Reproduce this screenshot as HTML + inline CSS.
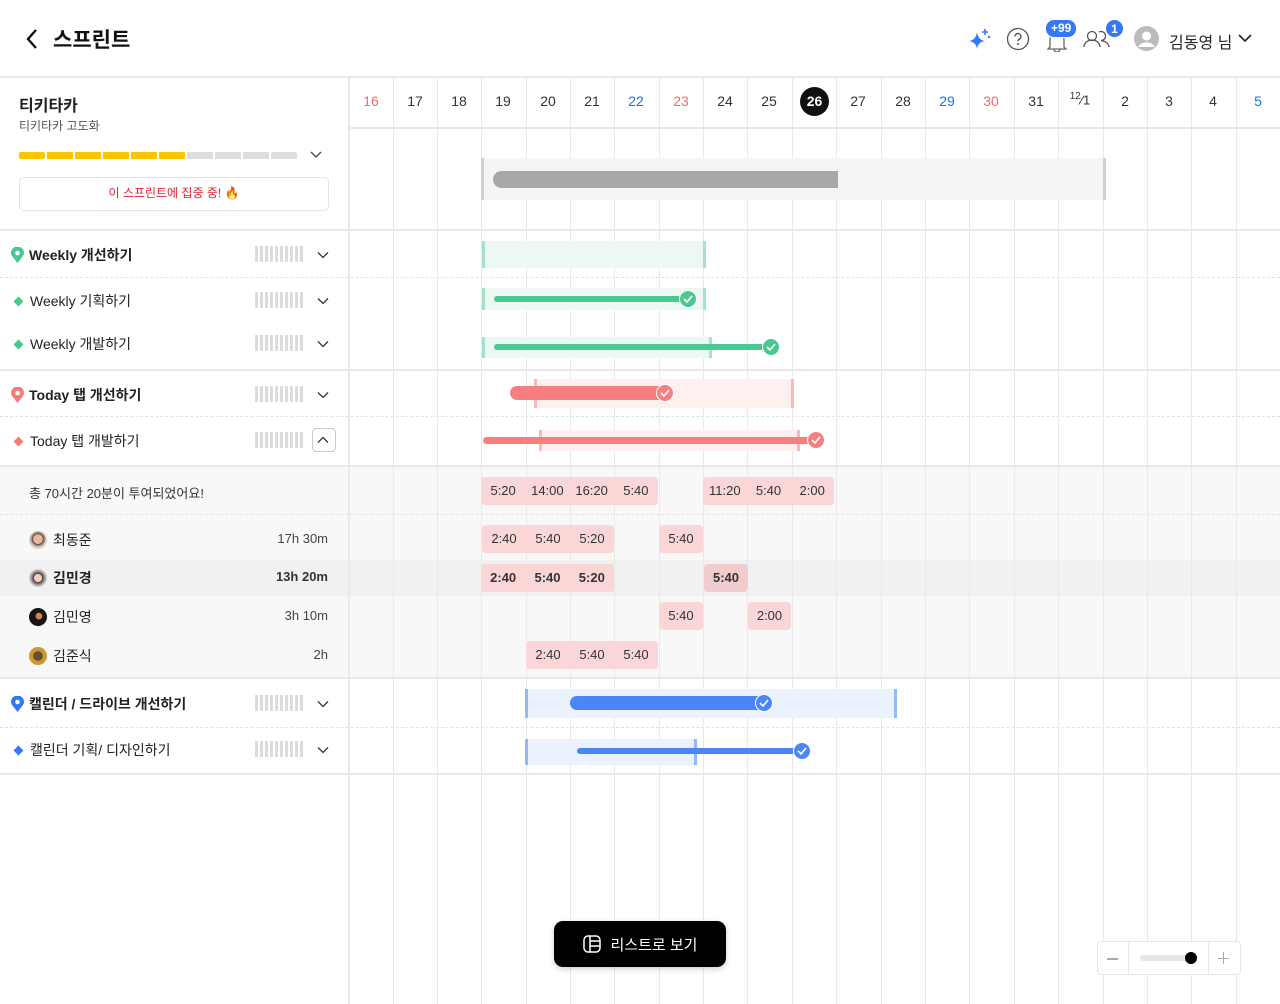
<!DOCTYPE html>
<html><head><meta charset="utf-8">
<style>
*{margin:0;padding:0;box-sizing:border-box}
body{width:1280px;height:1004px;position:relative;background:#fff;font-family:"Liberation Sans","Noto Sans CJK KR",sans-serif;color:#222;overflow:hidden}
.a{position:absolute}
.vl{position:absolute;top:77px;bottom:0;width:1px;background:#e9e9e9}
.hl{position:absolute;left:0;right:0;height:2px;background:#e8e8e8}
.dl{position:absolute;left:0;right:0;border-top:1px dashed #e2e2e2}
.d{position:absolute;top:93px;width:44px;text-align:center;font-size:14px;color:#333}
.lbl{position:absolute;font-size:14px;color:#222;display:flex;align-items:center;gap:6px;white-space:nowrap}
.sub{gap:8px}
.bars{position:absolute;left:255px;width:48px;height:16px;background:repeating-linear-gradient(90deg,#dcdcdc 0 3px,transparent 3px 5px)}
.chev{position:absolute;left:317px;width:12px;height:12px}
.chip{position:absolute;background:#fad6d6;border-radius:4px;display:flex;font-size:13px;color:#333}
.chip span{flex:1;text-align:center;line-height:28px}
.ck{position:absolute;width:18px;height:18px;border-radius:50%;border:1.5px solid #fff;display:flex;align-items:center;justify-content:center}
.av{width:18px;height:18px;border-radius:50%;display:inline-block}
</style></head><body>
<svg class="a" style="left:24px;top:28px" width="16" height="22" viewBox="0 0 16 22"><path d="M12 2 L4 11 L12 20" fill="none" stroke="#111" stroke-width="2.4"/></svg>
<div class="a" style="left:53px;top:24px;font-size:21px;font-weight:bold;color:#111">스프린트</div>

<svg class="a" style="left:968px;top:27px" width="24" height="24" viewBox="0 0 24 24"><path d="M9 5 Q10 13 17 14 Q10 15 9 22 Q8 15 1 14 Q8 13 9 5Z" fill="#3478f6"/><path d="M17 2v6M14 5h6" stroke="#3478f6" stroke-width="1.6"/><circle cx="21" cy="10" r="1.2" fill="#3478f6"/></svg>
<svg class="a" style="left:1006px;top:27px" width="24" height="24" viewBox="0 0 24 24"><circle cx="12" cy="12" r="10.5" fill="none" stroke="#555" stroke-width="1.3"/><path d="M9 9.5a3 3 0 1 1 4 2.8c-.8.4-1 1-1 2" fill="none" stroke="#555" stroke-width="1.4"/><circle cx="12" cy="17" r="1" fill="#555"/></svg>
<svg class="a" style="left:1045px;top:30px" width="24" height="22" viewBox="0 0 24 22"><path d="M5 17V10a7 7 0 0 1 14 0v7l2 2H3z M9 19a3 3 0 0 0 6 0" fill="none" stroke="#666" stroke-width="1.3"/></svg>
<div class="a" style="left:1045px;top:19px;background:#3478f6;color:#fff;font-size:12px;font-weight:bold;border-radius:9px;padding:0 5px;line-height:17px;border:1.5px solid #fff">+99</div>
<svg class="a" style="left:1083px;top:29px" width="28" height="20" viewBox="0 0 28 20"><circle cx="9" cy="7" r="4.5" fill="none" stroke="#555" stroke-width="1.3"/><path d="M1 18a8 7 0 0 1 16 0" fill="none" stroke="#555" stroke-width="1.3"/><path d="M16 3a4.5 4.5 0 1 1 2 8.5M19 12a7 7 0 0 1 7 6" fill="none" stroke="#555" stroke-width="1.3"/></svg>
<div class="a" style="left:1105px;top:19px;width:19px;height:19px;border-radius:50%;background:#3478f6;color:#fff;font-size:12px;font-weight:bold;text-align:center;line-height:18px;border:1.5px solid #fff">1</div>
<svg class="a" style="left:1134px;top:26px" width="25" height="25" viewBox="0 0 25 25"><circle cx="12.5" cy="12.5" r="12.5" fill="#bbb"/><circle cx="12.5" cy="10" r="4.5" fill="#fff"/><path d="M4 21a9 7 0 0 1 17 0" fill="#fff"/></svg>
<div class="a" style="left:1169px;top:29px;font-size:16px;color:#222;white-space:nowrap">김동영 님</div>
<svg class="a" style="left:1238px;top:33px" width="14" height="10" viewBox="0 0 14 10"><path d="M1 2l6 6 6-6" fill="none" stroke="#222" stroke-width="1.6"/></svg>

<div class="hl" style="top:76px"></div>
<div class="a" style="left:349px;top:127px;right:0;height:2px;background:#e8e8e8"></div>
<div class="hl" style="top:229px"></div>
<div class="hl" style="top:369px"></div>
<div class="a" style="left:0;right:0;top:466px;height:212px;background:#f8f8f8"></div>
<div class="a" style="left:0;right:0;top:560px;height:36px;background:#f1f1f1"></div>
<div class="hl" style="top:465px"></div>
<div class="hl" style="top:677px"></div>
<div class="hl" style="top:773px"></div>
<div class="dl" style="top:277px"></div>
<div class="dl" style="top:416px"></div>
<div class="dl" style="top:514px"></div>
<div class="dl" style="top:727px"></div>
<div class="vl" style="left:348px;width:2px"></div>
<div class="vl" style="left:393px"></div><div class="vl" style="left:437px"></div><div class="vl" style="left:481px"></div><div class="vl" style="left:526px"></div><div class="vl" style="left:570px"></div><div class="vl" style="left:614px"></div><div class="vl" style="left:659px"></div><div class="vl" style="left:703px"></div><div class="vl" style="left:747px"></div><div class="vl" style="left:792px"></div><div class="vl" style="left:836px"></div><div class="vl" style="left:881px"></div><div class="vl" style="left:925px"></div><div class="vl" style="left:969px"></div><div class="vl" style="left:1014px"></div><div class="vl" style="left:1058px"></div><div class="vl" style="left:1103px"></div><div class="vl" style="left:1147px"></div><div class="vl" style="left:1191px"></div><div class="vl" style="left:1236px"></div>

<div class="d" style="left:349px;color:#f06a6a">16</div><div class="d" style="left:393px">17</div><div class="d" style="left:437px">18</div><div class="d" style="left:481px">19</div><div class="d" style="left:526px">20</div><div class="d" style="left:570px">21</div><div class="d" style="left:614px;color:#1f6fe5">22</div><div class="d" style="left:659px;color:#f06a6a">23</div><div class="d" style="left:703px">24</div><div class="d" style="left:747px">25</div>
<div class="a" style="left:800px;top:87px;width:29px;height:29px;border-radius:50%;background:#111;color:#fff;font-weight:bold;font-size:14px;text-align:center;line-height:29px">26</div>
<div class="d" style="left:836px">27</div><div class="d" style="left:881px">28</div><div class="d" style="left:925px;color:#1f6fe5">29</div><div class="d" style="left:969px;color:#f06a6a">30</div><div class="d" style="left:1014px">31</div>
<div class="d" style="left:1058px;top:91px;font-size:13px"><sup style="font-size:10px">12</sup>⁄<span style="font-size:13px">1</span></div>
<div class="d" style="left:1103px">2</div><div class="d" style="left:1147px">3</div><div class="d" style="left:1191px">4</div><div class="d" style="left:1236px;color:#1f6fe5">5</div>

<div class="a" style="left:19px;top:92px;font-size:16px;font-weight:bold">티키타카</div>
<div class="a" style="left:19px;top:117px;font-size:12px;color:#555">티키타카 고도화</div>
<div class="a" style="left:19px;top:152px;display:flex;gap:2px">
<i style="width:26px;height:7px;background:#fdc500;border-radius:2px"></i><i style="width:26px;height:7px;background:#fdc500"></i><i style="width:26px;height:7px;background:#fdc500"></i><i style="width:26px;height:7px;background:#fdc500"></i><i style="width:26px;height:7px;background:#fdc500"></i><i style="width:26px;height:7px;background:#fdc500"></i><i style="width:26px;height:7px;background:#ddd"></i><i style="width:26px;height:7px;background:#ddd"></i><i style="width:26px;height:7px;background:#ddd"></i><i style="width:26px;height:7px;background:#ddd;border-radius:2px"></i></div>
<svg class="a" style="left:310px;top:150px" width="12" height="9" viewBox="0 0 12 9"><path d="M1 2l5 5 5-5" fill="none" stroke="#444" stroke-width="1.3"/></svg>
<div class="a" style="left:19px;top:177px;width:310px;height:34px;border:1.5px solid #e4e4e4;border-radius:5px;text-align:center;line-height:31px;font-size:12px;color:#e0202c">이 스프린트에 집중 중! 🔥</div>

<div class="a" style="left:481px;top:158px;width:625px;height:42px;background:#f5f5f5;border-left:3px solid #d0d0d0;border-right:3px solid #d0d0d0"></div>
<div class="a" style="left:493px;top:171px;width:345px;height:17px;background:#a8a8a8;border-radius:9px 0 0 9px"></div>

<svg class="a" style="left:11px;top:247px" width="13" height="16" viewBox="0 0 13 16"><path d="M6.5 16C2 10 0 8.5 0 6a6.5 6.5 0 0 1 13 0c0 2.5-2 4-6.5 10z" fill="#4ac88e"/><circle cx="6.5" cy="6" r="2.3" fill="#fff"/></svg>
<div class="lbl" style="left:29px;top:245px;font-weight:bold">Weekly 개선하기</div>
<div class="lbl sub" style="left:15px;top:291px"><i style="width:7px;height:7px;background:#4ac88e;transform:rotate(45deg)"></i>Weekly 기획하기</div>
<div class="lbl sub" style="left:15px;top:334px"><i style="width:7px;height:7px;background:#4ac88e;transform:rotate(45deg)"></i>Weekly 개발하기</div>
<svg class="a" style="left:11px;top:387px" width="13" height="16" viewBox="0 0 13 16"><path d="M6.5 16C2 10 0 8.5 0 6a6.5 6.5 0 0 1 13 0c0 2.5-2 4-6.5 10z" fill="#f77a7a"/><circle cx="6.5" cy="6" r="2.3" fill="#fff"/></svg>
<div class="lbl" style="left:29px;top:385px;font-weight:bold">Today 탭 개선하기</div>
<div class="lbl sub" style="left:15px;top:431px"><i style="width:7px;height:7px;background:#f77a7a;transform:rotate(45deg)"></i>Today 탭 개발하기</div>
<svg class="a" style="left:11px;top:696px" width="13" height="16" viewBox="0 0 13 16"><path d="M6.5 16C2 10 0 8.5 0 6a6.5 6.5 0 0 1 13 0c0 2.5-2 4-6.5 10z" fill="#3478f6"/><circle cx="6.5" cy="6" r="2.3" fill="#fff"/></svg>
<div class="lbl" style="left:29px;top:694px;font-weight:bold">캘린더 / 드라이브 개선하기</div>
<div class="lbl sub" style="left:15px;top:740px"><i style="width:7px;height:7px;background:#3478f6;transform:rotate(45deg)"></i>캘린더 기획/ 디자인하기</div>

<div class="bars" style="top:246px"></div><div class="bars" style="top:292px"></div><div class="bars" style="top:335px"></div><div class="bars" style="top:386px"></div><div class="bars" style="top:432px"></div><div class="bars" style="top:695px"></div><div class="bars" style="top:741px"></div>
<svg class="chev" style="top:249px" viewBox="0 0 12 12"><path d="M1 3.5l5 5 5-5" fill="none" stroke="#333" stroke-width="1.3"/></svg>
<svg class="chev" style="top:295px" viewBox="0 0 12 12"><path d="M1 3.5l5 5 5-5" fill="none" stroke="#333" stroke-width="1.3"/></svg>
<svg class="chev" style="top:338px" viewBox="0 0 12 12"><path d="M1 3.5l5 5 5-5" fill="none" stroke="#333" stroke-width="1.3"/></svg>
<svg class="chev" style="top:389px" viewBox="0 0 12 12"><path d="M1 3.5l5 5 5-5" fill="none" stroke="#333" stroke-width="1.3"/></svg>
<div class="a" style="left:312px;top:428px;width:24px;height:24px;border:1px solid #ccc;border-radius:4px"></div>
<svg class="chev" style="top:434px" viewBox="0 0 12 12"><path d="M1 8.5l5-5 5 5" fill="none" stroke="#333" stroke-width="1.3"/></svg>
<svg class="chev" style="top:698px" viewBox="0 0 12 12"><path d="M1 3.5l5 5 5-5" fill="none" stroke="#333" stroke-width="1.3"/></svg>
<svg class="chev" style="top:744px" viewBox="0 0 12 12"><path d="M1 3.5l5 5 5-5" fill="none" stroke="#333" stroke-width="1.3"/></svg>

<div class="a" style="left:29px;top:483px;font-size:13px;color:#333">총 70시간 20분이 투여되었어요!</div>
<div class="lbl" style="left:29px;top:530px"><i class="av" style="background:radial-gradient(circle at 50% 45%,#e8b89c 35%,#5a4036 37%,#d8d0c8 60%)"></i>최동준</div>
<div class="a" style="left:250px;top:531px;width:78px;text-align:right;font-size:13px;color:#444">17h 30m</div>
<div class="lbl" style="left:29px;top:568px;font-weight:bold"><i class="av" style="background:radial-gradient(circle at 50% 50%,#f0d0c0 30%,#4a3a34 33%,#ccc 65%)"></i>김민경</div>
<div class="a" style="left:250px;top:569px;width:78px;text-align:right;font-size:13px;font-weight:bold;color:#333">13h 20m</div>
<div class="lbl" style="left:29px;top:607px"><i class="av" style="background:radial-gradient(circle at 55% 45%,#c68a5a 22%,#1a1512 26%)"></i>김민영</div>
<div class="a" style="left:250px;top:608px;width:78px;text-align:right;font-size:13px;color:#444">3h 10m</div>
<div class="lbl" style="left:29px;top:646px"><i class="av" style="background:radial-gradient(circle at 50% 50%,#6a4a30 35%,#c99a30 40%)"></i>김준식</div>
<div class="a" style="left:250px;top:647px;width:78px;text-align:right;font-size:13px;color:#444">2h</div>

<div class="chip" style="left:481px;top:477px;width:177px;height:28px"><span>5:20</span><span>14:00</span><span>16:20</span><span>5:40</span></div>
<div class="chip" style="left:703px;top:477px;width:131px;height:28px"><span>11:20</span><span>5:40</span><span>2:00</span></div>
<div class="chip" style="left:482px;top:525px;width:132px;height:28px"><span>2:40</span><span>5:40</span><span>5:20</span></div>
<div class="chip" style="left:659px;top:525px;width:44px;height:28px"><span>5:40</span></div>
<div class="chip" style="left:481px;top:564px;width:133px;height:28px;font-weight:bold"><span>2:40</span><span>5:40</span><span>5:20</span></div>
<div class="chip" style="left:704px;top:564px;width:44px;height:28px;font-weight:bold;background:#f1cccc"><span>5:40</span></div>
<div class="chip" style="left:659px;top:602px;width:44px;height:28px"><span>5:40</span></div>
<div class="chip" style="left:748px;top:602px;width:43px;height:28px"><span>2:00</span></div>
<div class="chip" style="left:526px;top:641px;width:132px;height:28px"><span>2:40</span><span>5:40</span><span>5:40</span></div>

<div class="a" style="left:482px;top:241px;width:224px;height:27px;background:#ecf8f3;border-left:3px solid #a8e2c6;border-right:3px solid #a8e2c6"></div>
<div class="a" style="left:482px;top:288px;width:224px;height:22px;background:#ecf8f3;border-left:3px solid #a8e2c6;border-right:3px solid #a8e2c6"></div>
<div class="a" style="left:494px;top:296px;width:194px;height:6px;background:#4ac88e;border-radius:3px"></div>
<div class="ck" style="left:679px;top:290px;background:#4ac88e"><svg width="10" height="8" viewBox="0 0 10 8"><path d="M1 4l3 3 5-6" fill="none" stroke="#fff" stroke-width="1.6"/></svg></div>
<div class="a" style="left:482px;top:337px;width:230px;height:21px;background:#ecf8f3;border-left:3px solid #a8e2c6;border-right:3px solid #a8e2c6"></div>
<div class="a" style="left:494px;top:344px;width:277px;height:6px;background:#4ac88e;border-radius:3px"></div>
<div class="ck" style="left:762px;top:338px;background:#4ac88e"><svg width="10" height="8" viewBox="0 0 10 8"><path d="M1 4l3 3 5-6" fill="none" stroke="#fff" stroke-width="1.6"/></svg></div>

<div class="a" style="left:534px;top:379px;width:260px;height:29px;background:#fff0f0;border-left:3px solid #fbb8b8;border-right:3px solid #fbb8b8"></div>
<div class="a" style="left:510px;top:386px;width:155px;height:14px;background:#f77f7f;border-radius:7px 0 0 7px"></div>
<div class="ck" style="left:656px;top:384px;background:#f77f7f"><svg width="10" height="8" viewBox="0 0 10 8"><path d="M1 4l3 3 5-6" fill="none" stroke="#fff" stroke-width="1.6"/></svg></div>
<div class="a" style="left:539px;top:430px;width:261px;height:21px;background:#fff0f0;border-left:3px solid #fbb8b8;border-right:3px solid #fbb8b8"></div>
<div class="a" style="left:483px;top:437px;width:333px;height:7px;background:#f77f7f;border-radius:4px"></div>
<div class="ck" style="left:807px;top:431px;background:#f77f7f"><svg width="10" height="8" viewBox="0 0 10 8"><path d="M1 4l3 3 5-6" fill="none" stroke="#fff" stroke-width="1.6"/></svg></div>

<div class="a" style="left:525px;top:689px;width:372px;height:29px;background:#ebf2fe;border-left:3px solid #94b9fa;border-right:3px solid #94b9fa"></div>
<div class="a" style="left:570px;top:696px;width:194px;height:14px;background:#4a86f7;border-radius:7px 0 0 7px"></div>
<div class="ck" style="left:755px;top:694px;background:#4a86f7"><svg width="10" height="8" viewBox="0 0 10 8"><path d="M1 4l3 3 5-6" fill="none" stroke="#fff" stroke-width="1.6"/></svg></div>
<div class="a" style="left:525px;top:739px;width:172px;height:26px;background:#ebf2fe;border-left:3px solid #94b9fa;border-right:3px solid #94b9fa"></div>
<div class="a" style="left:577px;top:748px;width:225px;height:6px;background:#4a86f7;border-radius:3px"></div>
<div class="ck" style="left:793px;top:742px;background:#4a86f7"><svg width="10" height="8" viewBox="0 0 10 8"><path d="M1 4l3 3 5-6" fill="none" stroke="#fff" stroke-width="1.6"/></svg></div>

<div class="a" style="left:554px;top:921px;width:172px;height:46px;background:#000;border-radius:9px;box-shadow:0 2px 6px rgba(0,0,0,.2);color:#fff;font-size:15px;display:flex;align-items:center;justify-content:center;gap:10px">
<svg width="18" height="18" viewBox="0 0 18 18"><rect x="1" y="1" width="16" height="16" rx="4" fill="none" stroke="#fff" stroke-width="1.5"/><path d="M7 1v16M7 6h10M7 11h10" stroke="#fff" stroke-width="1.5"/></svg>리스트로 보기</div>
<div class="a" style="left:1097px;top:941px;width:144px;height:34px;border:1.5px solid #e6e6e6;border-radius:4px;background:#fff"></div>
<div class="a" style="left:1128px;top:942px;width:1px;height:32px;background:#e6e6e6"></div>
<div class="a" style="left:1208px;top:942px;width:1px;height:32px;background:#e6e6e6"></div>
<div class="a" style="left:1107px;top:958px;width:11px;height:1.5px;background:#aaa"></div>
<div class="a" style="left:1218px;top:958px;width:11px;height:1px;background:#aaa"></div>
<div class="a" style="left:1223px;top:952px;width:1px;height:12px;background:#aaa"></div>
<div class="a" style="left:1140px;top:955px;width:50px;height:6px;background:#e6e6e6;border-radius:3px"></div>
<div class="a" style="left:1185px;top:952px;width:12px;height:12px;background:#000;border-radius:50%"></div>
</body></html>
